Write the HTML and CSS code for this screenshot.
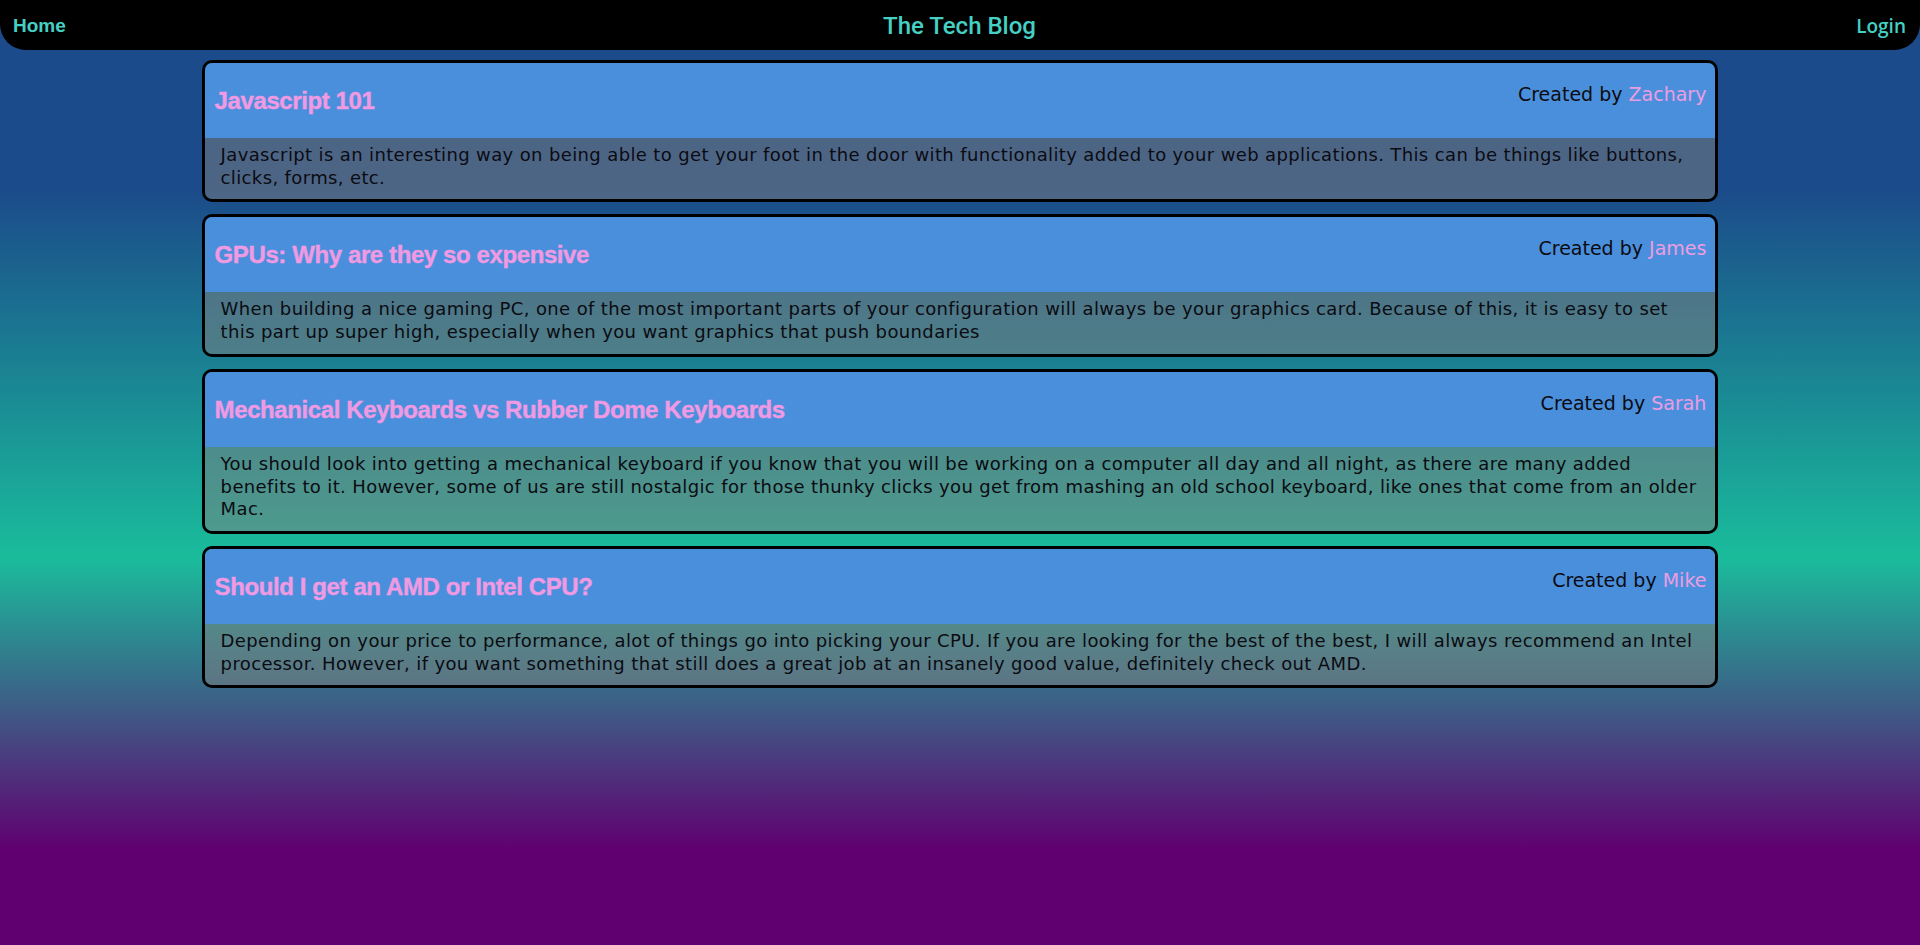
FILE: index.html
```html
<!DOCTYPE html>
<html lang="en">
<head>
<meta charset="utf-8">
<title>The Tech Blog</title>
<link rel="stylesheet" href="styles.css">
</head>
<body>
<header class="topbar">
  <a class="nav-home" href="#">Home</a>
  <h1 class="site-title">The Tech Blog</h1>
  <a class="nav-login" href="#">Login</a>
</header>
<main class="posts">
  <article class="post">
    <div class="post-head">
      <h2 class="post-title">Javascript 101</h2>
      <p class="post-author">Created by <span class="author-name">Zachary</span></p>
    </div>
    <div class="post-body">Javascript is an interesting way on being able to get your foot in the door with functionality added to your web applications. This can be things like buttons, clicks, forms, etc.</div>
  </article>
  <article class="post">
    <div class="post-head">
      <h2 class="post-title">GPUs: Why are they so expensive</h2>
      <p class="post-author">Created by <span class="author-name">James</span></p>
    </div>
    <div class="post-body">When building a nice gaming PC, one of the most important parts of your configuration will always be your graphics card. Because of this, it is easy to set this part up super high, especially when you want graphics that push boundaries</div>
  </article>
  <article class="post">
    <div class="post-head">
      <h2 class="post-title">Mechanical Keyboards vs Rubber Dome Keyboards</h2>
      <p class="post-author">Created by <span class="author-name">Sarah</span></p>
    </div>
    <div class="post-body">You should look into getting a mechanical keyboard if you know that you will be working on a computer all day and all night, as there are many added benefits to it. However, some of us are still nostalgic for those thunky clicks you get from mashing an old school keyboard, like ones that come from an older Mac.</div>
  </article>
  <article class="post">
    <div class="post-head">
      <h2 class="post-title">Should I get an AMD or Intel CPU?</h2>
      <p class="post-author">Created by <span class="author-name">Mike</span></p>
    </div>
    <div class="post-body">Depending on your price to performance, alot of things go into picking your CPU. If you are looking for the best of the best, I will always recommend an Intel processor. However, if you want something that still does a great job at an insanely good value, definitely check out AMD.</div>
  </article>
</main>
</body>
</html>
```

FILE: styles.css
```css
html {
  min-height: 100%;
  background: linear-gradient(to bottom, #1b4b8a 0%, #1b4b8a 20%, #1abc9c 59%, #600070 90%, #600070 100%);
}
body {
  margin: 0;
  min-height: 100vh;
  font-family: "Liberation Sans", Arial, sans-serif;
  color: #0b0b12;
}
.topbar {
  height: 50px;
  background: #000;
  border-radius: 0 0 26px 26px;
  display: flex;
  align-items: center;
  justify-content: space-between;
  padding: 0 14px 0 13px;
  box-sizing: border-box;
}
.topbar a { text-decoration: none; color: #45d0c4; }
.nav-home {
  font-family: "Liberation Sans", Arial, sans-serif;
  font-weight: 700;
  font-size: 19px;
  width: 120px;
  padding-top: 2px;
}
.nav-login {
  font-family: "Open Sans", sans-serif;
  font-weight: 600;
  font-size: 19px;
  width: 120px;
  text-align: right;
  padding-top: 2px;
}
.site-title {
  margin: 0;
  font-family: Roboto, sans-serif;
  font-weight: 500;
  font-size: 24px;
  color: #45d0c4;
  padding-top: 2px;
}
.posts {
  width: 79%;
  margin: 10px auto 0;
  display: flex;
  flex-direction: column;
  gap: 12px;
}
.post {
  border: 3px solid #000;
  border-radius: 10px;
  overflow: hidden;
}
.post-head {
  background: #4a8fdb;
  height: 75px;
  display: flex;
  justify-content: space-between;
  align-items: center;
  padding: 0 9px 0 10px;
}
.post-title {
  margin: 0;
  font-size: 24px;
  line-height: 29px;
  font-weight: 700;
  letter-spacing: -0.4px;
  color: #ef9ae3;
  -webkit-text-stroke: 0.4px #ef9ae3;
}
.post-author {
  margin: 19px 0 0;
  align-self: flex-start;
  font-family: "DejaVu Sans", sans-serif;
  font-size: 19px;
  line-height: 24px;
}
.author-name { color: #ec9de2; }
.post-body {
  background: rgba(128, 128, 128, 0.5);
  padding: 6px 16px 10px;
  font-family: "DejaVu Sans", sans-serif;
  font-size: 18px;
  line-height: 22.7px;
  letter-spacing: 0.37px;
}
```
